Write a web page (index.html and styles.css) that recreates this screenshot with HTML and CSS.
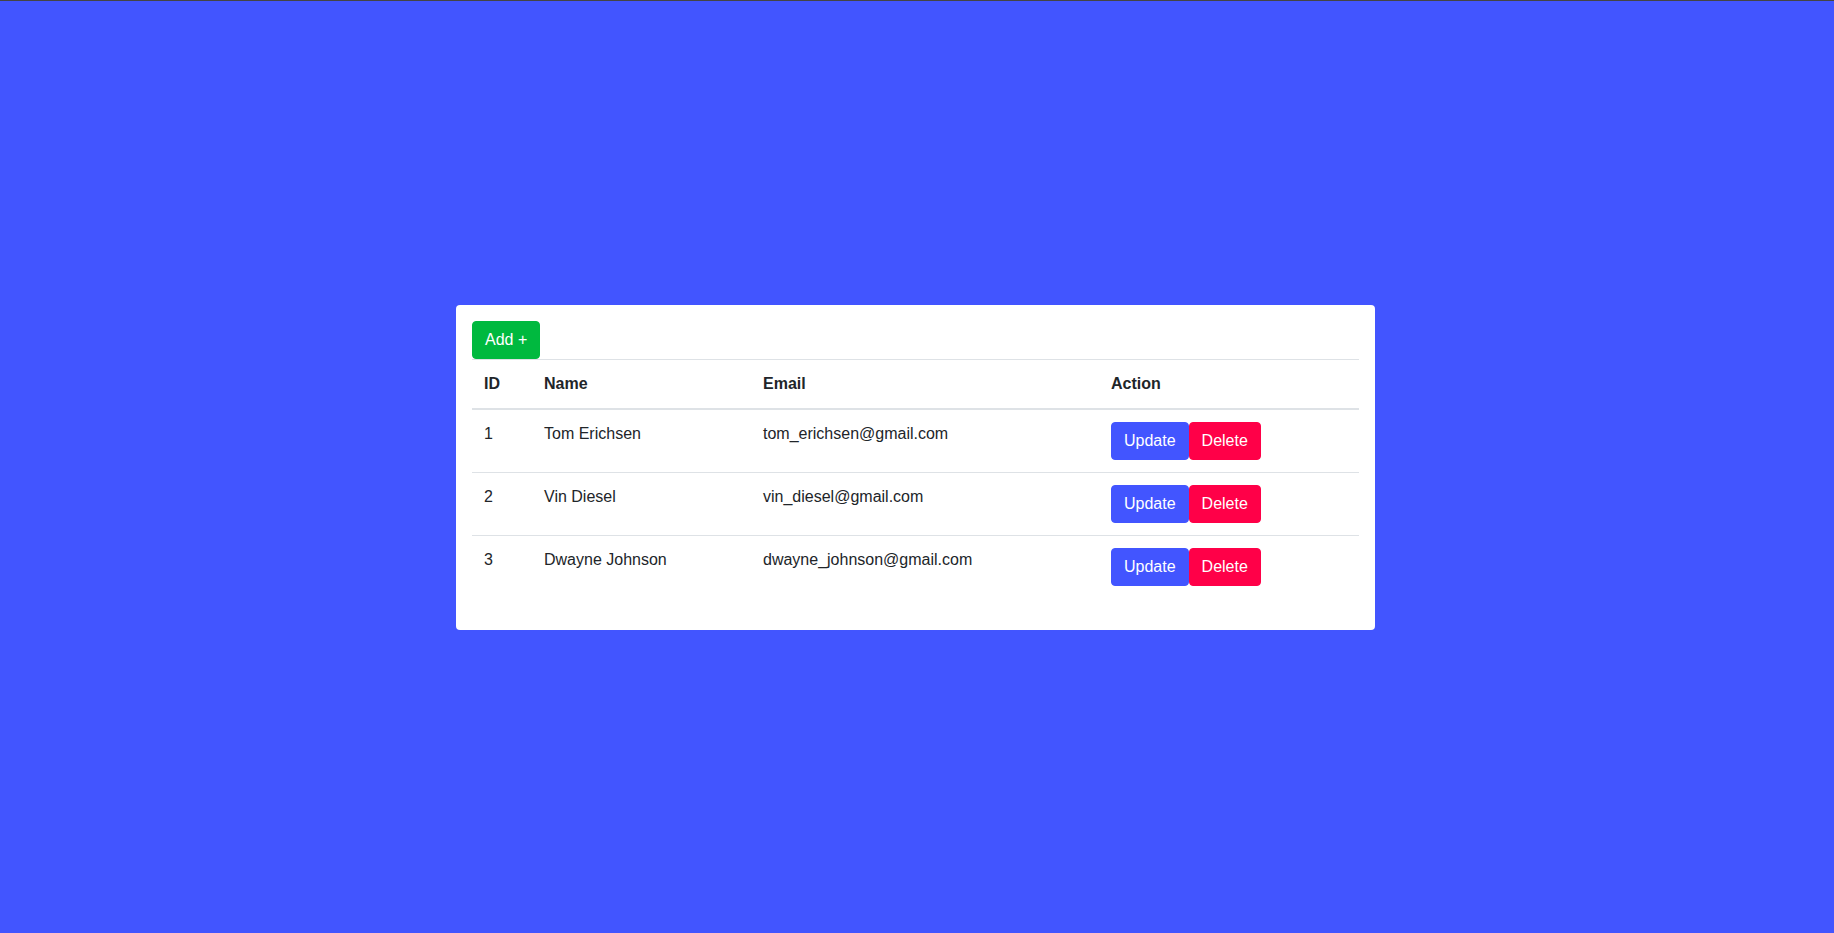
FILE: index.html
```html
<!DOCTYPE html>
<html>
<head>
<meta charset="utf-8">
<link rel="stylesheet" href="styles.css">
</head>
<body>
<div class="page">
  <div class="card">
    <button class="btn btn-add">Add +</button>
    <table class="table">
      <thead>
        <tr>
          <th class="c-id">ID</th>
          <th class="c-name">Name</th>
          <th class="c-email">Email</th>
          <th class="c-action">Action</th>
        </tr>
      </thead>
      <tbody>
        <tr>
          <td>1</td>
          <td>Tom Erichsen</td>
          <td>tom_erichsen@gmail.com</td>
          <td><div class="actions"><button class="btn btn-update">Update</button><button class="btn btn-delete">Delete</button></div></td>
        </tr>
        <tr>
          <td>2</td>
          <td>Vin Diesel</td>
          <td>vin_diesel@gmail.com</td>
          <td><div class="actions"><button class="btn btn-update">Update</button><button class="btn btn-delete">Delete</button></div></td>
        </tr>
        <tr>
          <td>3</td>
          <td>Dwayne Johnson</td>
          <td>dwayne_johnson@gmail.com</td>
          <td><div class="actions"><button class="btn btn-update">Update</button><button class="btn btn-delete">Delete</button></div></td>
        </tr>
      </tbody>
    </table>
  </div>
</div>
</body>
</html>
```
FILE: styles.css
```css
* { box-sizing: border-box; }
html, body {
  margin: 0;
  padding: 0;
  height: 100%;
}
body {
  background: #4255ff;
  font-family: "Liberation Sans", Arial, sans-serif;
  font-size: 16px;
  line-height: 24px;
  color: #212529;
  border-top: 1px solid #444444;
}
.page {
  height: 932px;
  display: flex;
  align-items: center;
  justify-content: center;
  padding-right: 3px;
}
.card {
  width: 919px;
  background: #ffffff;
  border-radius: 4px;
  padding: 16px 16px 16px;
}
.btn {
  font-family: "Liberation Sans", Arial, sans-serif;
  font-size: 16px;
  line-height: 24px;
  padding: 6px 12px;
  border: 1px solid transparent;
  border-radius: 4px;
  color: #ffffff;
  display: block;
  cursor: pointer;
}
.btn-add {
  background: #00b93f;
  border-color: #00b93f;
}
.btn-update {
  background: #4255ff;
  border-color: #4255ff;
}
.btn-delete {
  background: #ff0048;
  border-color: #ff0048;
}
.actions {
  display: flex;
}
.table {
  width: 100%;
  border-collapse: collapse;
  table-layout: fixed;
  margin-bottom: 16px;
}
.table th,
.table td {
  padding: 12px;
  text-align: left;
  vertical-align: top;
  border-top: 1px solid #dee2e6;
}
.table thead th {
  font-weight: bold;
  border-bottom: 2px solid #dee2e6;
  vertical-align: bottom;
}
.c-id { width: 60px; }
.c-name { width: 219px; }
.c-email { width: 348px; }
.c-action { width: 260px; }
```
